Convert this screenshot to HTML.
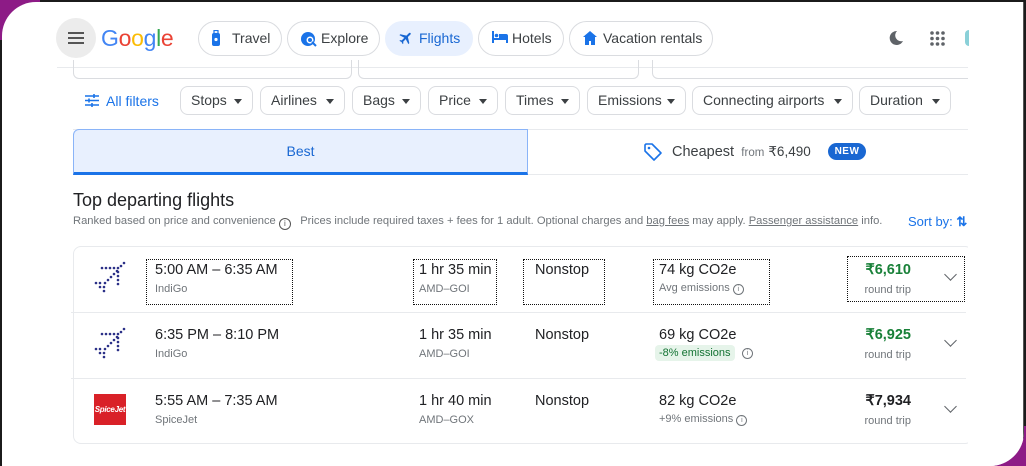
<!DOCTYPE html>
<html><head><meta charset="utf-8"><style>
*{box-sizing:border-box;margin:0;padding:0}
body{width:1026px;height:466px;overflow:hidden;background:#1b1b1b;position:relative;font-family:"Liberation Sans",Arial,sans-serif;color:#202124}
.pc{position:absolute;width:40px;height:40px;background:#8d1b86}
.card{position:absolute;left:2px;top:2px;width:1022px;height:464px;background:#fff;border-radius:34px 0 34px 0;overflow:hidden}
.a{position:absolute;white-space:nowrap}
.chip{position:absolute;top:21px;height:35px;border:1px solid #dadce0;border-radius:18px;font-size:14px;line-height:33px;color:#3c4043;padding-left:33px}
.chip svg{position:absolute;left:12px;top:8px}
.f{position:absolute;top:86px;height:29px;border:1px solid #dadce0;border-radius:8px;font-size:14px;line-height:27px;color:#3c4043;padding-left:10px}
.f:after{content:"";position:absolute;right:10px;top:12px;border:4px solid transparent;border-top:5px solid #3c4043}
.m{font-size:14.5px;color:#202124}
.s{font-size:11px;color:#70757a}
.dot{position:absolute;border:1.3px dotted #111}
.row{position:absolute;left:71px;width:895px;height:66px;border-top:1px solid #e8eaed}
.chev{position:absolute;width:9px;height:9px;border-right:1.6px solid #5f6368;border-bottom:1.6px solid #5f6368;transform:rotate(45deg)}
</style></head><body>
<div class="pc" style="left:0;top:0"></div>
<div class="pc" style="right:0;bottom:0"></div>
<div class="card">
<div style="position:absolute;left:-2px;top:-2px;width:1026px;height:466px">
<div class="a" style="left:56px;top:18px;width:40px;height:40px;border-radius:50%;background:#ececec"></div>
<div class="a" style="left:68px;top:32px;width:16px;height:2px;background:#555;box-shadow:0 5px 0 #555,0 10px 0 #555"></div>
<div class="a" style="left:101px;top:25px;font-size:23px;letter-spacing:-0.3px"><span style="color:#4285f4">G</span><span style="color:#ea4335">o</span><span style="color:#fbbc05">o</span><span style="color:#4285f4">g</span><span style="color:#34a853">l</span><span style="color:#ea4335">e</span></div>
<div class="chip" style="left:198px;width:84px"><svg width="10" height="18" viewBox="0 0 10 18"><rect x="1" y="3" width="8" height="13" rx="2" fill="#1a73e8"/><rect x="3" y="0.5" width="4" height="3" fill="none" stroke="#1a73e8" stroke-width="1.2"/><circle cx="5" cy="9.5" r="1.6" fill="#fff"/></svg>Travel</div>
<div class="chip" style="left:287px;width:93px"><svg width="18" height="18" viewBox="0 0 18 18"><circle cx="8" cy="9" r="7" fill="#1a73e8"/><circle cx="10" cy="10" r="3.5" fill="#fff"/><circle cx="10" cy="10" r="2" fill="#1a73e8"/><path d="M12 12l4 4" stroke="#1a73e8" stroke-width="2"/></svg>Explore</div>
<div class="chip" style="left:385px;width:88px;background:#e8f0fe;border-color:#e8f0fe;color:#1967d2"><svg width="16" height="16" viewBox="0 0 24 24"><path fill="#1967d2" d="M21 16v-2l-8-5V3.5a1.5 1.5 0 0 0-3 0V9l-8 5v2l8-2.5V19l-2 1.5V22l3.5-1 3.5 1v-1.5L13 19v-5.5z" transform="rotate(45 12 12)"/></svg>Flights</div>
<div class="chip" style="left:478px;width:86px"><svg width="18" height="14" viewBox="0 0 18 14"><path fill="#1a73e8" d="M1 1h2v7h5V4h7a2 2 0 0 1 2 2v7h-2v-3H3v3H1z"/><circle cx="5.5" cy="5.5" r="1.8" fill="#1a73e8"/></svg>Hotels</div>
<div class="chip" style="left:569px;width:144px"><svg width="16" height="16" viewBox="0 0 16 16"><path fill="#1a73e8" d="M8 1L1 7h2v8h4v-4h2v4h4V7h2z"/></svg>Vacation rentals</div>
<svg class="a" style="left:888px;top:30px" width="16" height="16" viewBox="0 0 16 16"><path fill="#5f6368" d="M9 1a7 7 0 1 0 6 10A6 6 0 0 1 9 1z"/></svg>
<svg class="a" style="left:930px;top:31px" width="15" height="15" viewBox="0 0 15 15" fill="#5f6368"><circle cx="2" cy="2" r="1.8"/><circle cx="7.5" cy="2" r="1.8"/><circle cx="13" cy="2" r="1.8"/><circle cx="2" cy="7.5" r="1.8"/><circle cx="7.5" cy="7.5" r="1.8"/><circle cx="13" cy="7.5" r="1.8"/><circle cx="2" cy="13" r="1.8"/><circle cx="7.5" cy="13" r="1.8"/><circle cx="13" cy="13" r="1.8"/></svg>
<div class="a" style="left:965px;top:30px;width:4px;height:16px;background:#8ad0d8;border-radius:4px 0 0 4px"></div>
<div class="a" style="left:57px;top:67px;width:911px;height:1px;background:#e8eaed"></div>
<div class="a" style="left:73px;top:60px;width:279px;height:19px;border:1px solid #dadce0;border-top:none;border-radius:0 0 6px 6px"></div>
<div class="a" style="left:358px;top:60px;width:281px;height:19px;border:1px solid #dadce0;border-top:none;border-radius:0 0 6px 6px"></div>
<div class="a" style="left:652px;top:60px;width:320px;height:19px;border:1px solid #dadce0;border-top:none;border-radius:0 0 0 6px"></div>
<svg class="a" style="left:85px;top:94px" width="14" height="13" viewBox="0 0 14 13" stroke="#1a73e8" stroke-width="1.6"><path d="M0 2h14M0 6.5h14M0 11h14"/><path d="M9 0v4M4 4.5v4M7 9v4"/></svg>
<div class="a" style="left:106px;top:93px;font-size:14px;color:#1a73e8">All filters</div>
<div class="f" style="left:180px;width:73px">Stops</div>
<div class="f" style="left:260px;width:85px">Airlines</div>
<div class="f" style="left:352px;width:69px">Bags</div>
<div class="f" style="left:428px;width:70px">Price</div>
<div class="f" style="left:505px;width:75px">Times</div>
<div class="f" style="left:587px;width:99px">Emissions</div>
<div class="f" style="left:692px;width:161px">Connecting airports</div>
<div class="f" style="left:859px;width:92px">Duration</div>
<div class="a" style="left:73px;top:129px;width:895px;height:1px;background:#e8eaed"></div>
<div class="a" style="left:73px;top:129px;width:455px;height:46px;background:#e8f0fe;border:1px solid #8ab4f8;border-bottom:3px solid #1a73e8;border-radius:6px 0 0 0;text-align:center;line-height:42px;font-size:14px;color:#1967d2">Best</div>
<div class="a" style="left:528px;top:174px;width:440px;height:1px;background:#e8eaed"></div>
<svg class="a" style="left:643px;top:142px" width="20" height="20" viewBox="0 0 20 20"><path d="M2 3v6l9 9 7-7-9-9H3z" fill="none" stroke="#1a73e8" stroke-width="1.6" stroke-linejoin="round"/><circle cx="6" cy="6" r="1.3" fill="#1a73e8"/></svg>
<div class="a" style="left:672px;top:144px;font-size:14.5px;color:#3c4043">Cheapest <span style="font-size:11.5px;color:#70757a">&nbsp;from</span> <span style="font-size:13.5px">₹6,490</span></div>
<div class="a" style="left:828px;top:143px;width:38px;height:17px;border-radius:9px;background:#1967d2;color:#fff;font-size:10px;font-weight:bold;text-align:center;line-height:17px;letter-spacing:.5px">NEW</div>
<div class="a" style="left:73px;top:190px;font-size:18px;color:#202124">Top departing flights</div>
<div class="a" style="left:73px;top:215px;font-size:11.2px;color:#70757a">Ranked based on price and convenience <span style="display:inline-block;width:12px;height:12px;border:1.2px solid #555;border-radius:50%;font-size:8px;text-align:center;line-height:10px;color:#555;vertical-align:-2px">i</span> &nbsp;&nbsp;Prices include required taxes + fees for 1 adult. Optional charges and <u>bag fees</u> may apply. <u>Passenger assistance</u> info.</div>
<div class="a" style="left:908px;top:214px;font-size:13px;color:#1a73e8">Sort by: <b>⇅</b></div>
<div class="a" style="left:73px;top:246px;width:900px;height:198px;border:1px solid #e8eaed;border-radius:8px"></div>
<div class="row" style="top:312px"></div>
<div class="row" style="top:378px"></div>
<svg class="a" style="left:92px;top:260px" width="36" height="34" viewBox="0 0 36 34" fill="#2b3087"><g id="ig"><circle cx="10" cy="8" r="1.3"/><circle cx="14" cy="8" r="1.3"/><circle cx="18" cy="8" r="1.3"/><circle cx="22" cy="8" r="1.3"/><circle cx="26" cy="8" r="1.3"/><circle cx="32" cy="3" r="1.3"/><circle cx="29" cy="6" r="1.3"/><circle cx="25" cy="11" r="1.3"/><circle cx="22" cy="14" r="1.3"/><circle cx="19" cy="17" r="1.3"/><circle cx="16" cy="20" r="1.3"/><circle cx="13" cy="23" r="1.3"/><circle cx="26" cy="12" r="1.3"/><circle cx="26" cy="16" r="1.3"/><circle cx="26" cy="20" r="1.3"/><circle cx="26" cy="24" r="1.3"/><circle cx="4" cy="23" r="1.3"/><circle cx="8" cy="23" r="1.3"/><circle cx="8" cy="27" r="1.3"/><circle cx="12" cy="27" r="1.3"/><circle cx="12" cy="31" r="1.3"/></g></svg>
<svg class="a" style="left:92px;top:326px" width="36" height="34" viewBox="0 0 36 34" fill="#2b3087"><use href="#ig"/></svg>
<div class="a" style="left:94px;top:394px;width:32px;height:31px;background:#d92128;color:#fff;font-size:8px;font-style:italic;font-weight:bold;text-align:center;line-height:31px;letter-spacing:-0.3px">SpiceJet</div>
<div class="a m" style="left:155px;top:262px">5:00 AM – 6:35 AM</div><div class="a s" style="left:155px;top:283px">IndiGo</div>
<div class="a m" style="left:155px;top:327px">6:35 PM – 8:10 PM</div><div class="a s" style="left:155px;top:348px">IndiGo</div>
<div class="a m" style="left:155px;top:393px">5:55 AM – 7:35 AM</div><div class="a s" style="left:155px;top:414px">SpiceJet</div>
<div class="a m" style="left:419px;top:262px">1 hr 35 min</div><div class="a s" style="left:419px;top:283px">AMD–GOI</div>
<div class="a m" style="left:419px;top:327px">1 hr 35 min</div><div class="a s" style="left:419px;top:348px">AMD–GOI</div>
<div class="a m" style="left:419px;top:393px">1 hr 40 min</div><div class="a s" style="left:419px;top:414px">AMD–GOX</div>
<div class="a m" style="left:535px;top:262px">Nonstop</div>
<div class="a m" style="left:535px;top:327px">Nonstop</div>
<div class="a m" style="left:535px;top:393px">Nonstop</div>
<div class="a m" style="left:659px;top:262px">74 kg CO2e</div><div class="a s" style="left:659px;top:282px">Avg emissions <span style="display:inline-block;width:11px;height:11px;border:1px solid #70757a;border-radius:50%;font-size:7px;text-align:center;line-height:9px">i</span></div>
<div class="a m" style="left:659px;top:327px">69 kg CO2e</div><div class="a s" style="left:655px;top:345px;background:#e6f4ea;color:#137333;padding:2px 4px;border-radius:4px">-8% emissions</div><div class="a" style="left:742px;top:348px;width:11px;height:11px;border:1px solid #70757a;border-radius:50%;font-size:7px;text-align:center;line-height:9px;color:#70757a">i</div>
<div class="a m" style="left:659px;top:393px">82 kg CO2e</div><div class="a s" style="left:659px;top:413px">+9% emissions <span style="display:inline-block;width:11px;height:11px;border:1px solid #70757a;border-radius:50%;font-size:7px;text-align:center;line-height:9px">i</span></div>
<div class="a m" style="right:115px;top:262px;color:#188038;font-weight:bold">₹6,610</div><div class="a s" style="right:115px;top:284px">round trip</div>
<div class="a m" style="right:115px;top:327px;color:#188038;font-weight:bold">₹6,925</div><div class="a s" style="right:115px;top:349px">round trip</div>
<div class="a m" style="right:115px;top:393px;font-weight:bold">₹7,934</div><div class="a s" style="right:115px;top:415px">round trip</div>
<div class="chev" style="left:946px;top:270px"></div>
<div class="chev" style="left:946px;top:336px"></div>
<div class="chev" style="left:946px;top:402px"></div>
<div class="dot" style="left:146px;top:259px;width:147px;height:46px"></div>
<div class="dot" style="left:413px;top:259px;width:84px;height:46px"></div>
<div class="dot" style="left:523px;top:259px;width:82px;height:46px"></div>
<div class="dot" style="left:653px;top:259px;width:117px;height:46px"></div>
<div class="dot" style="left:847px;top:256px;width:118px;height:46px"></div>
<div class="a" style="left:968px;top:60px;width:60px;height:410px;background:#fff"></div>
<div class="a" style="left:1023px;top:0;width:3px;height:440px;background:#555"></div>
</div>
</div>
</body></html>
